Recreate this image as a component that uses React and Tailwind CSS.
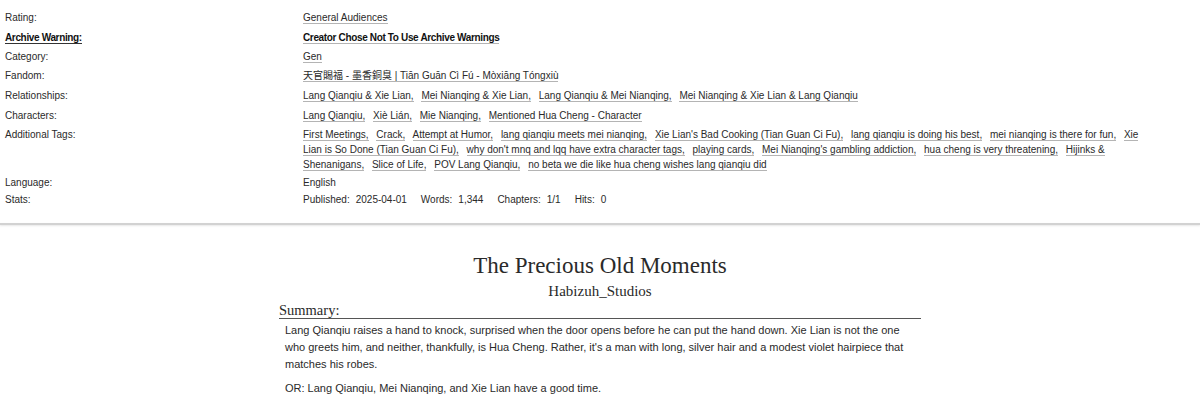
import React from "react";

const meta = [
  { label: "Rating:", tags: ["General Audiences"], gap: "mb-[5px]" },
  { label: "Archive Warning:", tags: ["Creator Chose Not To Use Archive Warnings"], strong: true, gap: "mb-[4px]" },
  { label: "Category:", tags: ["Gen"], gap: "mb-[4px]" },
  { label: "Fandom:", tags: ["天官賜福 - 墨香銅臭 | Tiān Guān Cì Fú - Mòxiāng Tóngxiù"], gap: "mb-[5px]" },
  {
    label: "Relationships:",
    tags: [
      "Lang Qianqiu & Xie Lian",
      "Mei Nianqing & Xie Lian",
      "Lang Qianqiu & Mei Nianqing",
      "Mei Nianqing & Xie Lian & Lang Qianqiu",
    ],
    gap: "mb-[5px]",
  },
  {
    label: "Characters:",
    tags: ["Lang Qianqiu", "Xiè Lián", "Mie Nianqing", "Mentioned Hua Cheng - Character"],
    gap: "mb-[4px]",
  },
  {
    label: "Additional Tags:",
    tags: [
      "First Meetings",
      "Crack",
      "Attempt at Humor",
      "lang qianqiu meets mei nianqing",
      "Xie Lian's Bad Cooking (Tian Guan Ci Fu)",
      "lang qianqiu is doing his best",
      "mei nianqing is there for fun",
      "Xie Lian is So Done (Tian Guan Ci Fu)",
      "why don't mnq and lqq have extra character tags",
      "playing cards",
      "Mei Nianqing's gambling addiction",
      "hua cheng is very threatening",
      "Hijinks & Shenanigans",
      "Slice of Life",
      "POV Lang Qianqiu",
      "no beta we die like hua cheng wishes lang qianqiu did",
    ],
    gap: "mb-[3px]",
  },
];

const stats = [
  ["Published:", "2025-04-01"],
  ["Words:", "1,344"],
  ["Chapters:", "1/1"],
  ["Hits:", "0"],
];

function TagList({ tags, strong }) {
  return (
    <div className="flex-1 min-w-0">
      {tags.map((t, i) => (
        <React.Fragment key={i}>
          <a
            className={
              "border-b border-[#b4b4b4] " +
              (strong ? "font-bold text-[#111] tracking-[-0.35px] " : "text-[#2a2a2a] ") +
              (i < tags.length - 1 ? "mr-[5px]" : "")
            }
          >
            {t}
            {tags.length > 1 && i < tags.length - 1 ? "," : ""}
          </a>
          {i < tags.length - 1 ? " " : ""}
        </React.Fragment>
      ))}
    </div>
  );
}

export default function App() {
  return (
    <div className="w-[1200px] h-[405px] overflow-hidden bg-white text-[#2a2a2a]">
      {/* work meta */}
      <div
        className="pt-[10px] pl-[5px] pr-[40px] text-[10px] leading-[15px]"
        style={{ fontFamily: '"Liberation Sans", "Noto Sans CJK SC", sans-serif' }}
      >
        {meta.map((row) => (
          <div key={row.label} className={"flex " + row.gap}>
            <div className="w-[298px] shrink-0">
              <span
                className={
                  row.strong ? "font-bold text-[#111] tracking-[-0.35px] border-b border-[#333]" : ""
                }
              >
                {row.label}
              </span>
            </div>
            <TagList tags={row.tags} strong={row.strong} />
          </div>
        ))}
        <div className="flex mb-[2px]">
          <div className="w-[298px] shrink-0">Language:</div>
          <div>English</div>
        </div>
        <div className="flex">
          <div className="w-[298px] shrink-0">Stats:</div>
          <div className="flex gap-[14px]">
            {stats.map(([k, v]) => (
              <span key={k}>
                {k}
                <span className="ml-[6px]">{v}</span>
              </span>
            ))}
          </div>
        </div>
      </div>

      {/* divider */}
      <div className="mt-[16px] h-[2px] bg-[#d2d2d2] shadow-[0_1px_2px_rgba(0,0,0,0.1)]" />

      {/* preface */}
      <div className="flex flex-col items-center pt-[27px]" style={{ fontFamily: '"Liberation Serif", serif' }}>
        <h2 className="text-[23px] leading-[28px] text-[#2a2a2a]">The Precious Old Moments</h2>
        <h3 className="mt-[1px] text-[15px] leading-[20px] text-[#2a2a2a]">Habizuh_Studios</h3>
        <div className="w-[642px] mt-[2px]">
          <h3 className="text-[14.5px] leading-[15px] border-b border-[#555]">Summary:</h3>
          <div
            className="pl-[6px] pr-[16px] pt-[3px] text-[11px] leading-[17px]"
            style={{ fontFamily: '"Liberation Sans", sans-serif' }}
          >
            <p>
              Lang Qianqiu raises a hand to knock, surprised when the door opens before he can put the hand down. Xie Lian
              is not the one who greets him, and neither, thankfully, is Hua Cheng. Rather, it's a man with long, silver
              hair and a modest violet hairpiece that matches his robes.
            </p>
            <p className="mt-[7px]">OR: Lang Qianqiu, Mei Nianqing, and Xie Lian have a good time.</p>
          </div>
        </div>
      </div>
    </div>
  );
}
